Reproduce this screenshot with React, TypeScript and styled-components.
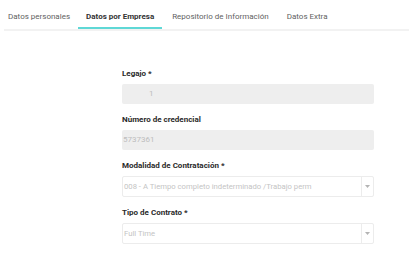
import * as React from 'react';
import styled, { createGlobalStyle } from 'styled-components';

const GlobalStyle = createGlobalStyle`
    body {
        margin: 0;
        background: #ffffff;
        font-family: Roboto, "Liberation Sans", Arial, sans-serif;
    }
`;

const tabs = ['Datos personales', 'Datos por Empresa', 'Repositorio de Información', 'Datos Extra'];

interface Field {
    label: string;
    value: string;
    kind: 'input' | 'select';
    indent?: number;
}

const fields: Field[] = [
    { label: 'Legajo *', value: '1', kind: 'input', indent: 27 },
    { label: 'Número de credencial', value: '5737361', kind: 'input' },
    { label: 'Modalidad de Contratación *', value: '008 - A Tiempo completo indeterminado /Trabajo perm', kind: 'select' },
    { label: 'Tipo de Contrato *', value: 'Full Time', kind: 'select' },
];

export default class App extends React.Component {
    renderField = (field: Field, index: number) => {
        return (
            <FieldBlock key={index}>
                <Label>{field.label}</Label>
                {field.kind === 'input' ? (
                    <ReadOnlyInput $indent={field.indent || 1}>{field.value}</ReadOnlyInput>
                ) : (
                    <SelectBox>
                        <SelectValue>{field.value}</SelectValue>
                        <SelectArrow>
                            <svg width="5" height="3" viewBox="0 0 5 3">
                                <path d="M0 0 H5 L2.5 3 Z" fill="#b4b4b4" />
                            </svg>
                        </SelectArrow>
                    </SelectBox>
                )}
            </FieldBlock>
        );
    }

    render() {
        return (
            <Page>
                <GlobalStyle />
                <TabBar>
                    {tabs.map((tab, index) => (
                        <Tab key={index} $active={index === 1}>{tab}</Tab>
                    ))}
                </TabBar>
                <Form>
                    {fields.map(this.renderField)}
                </Form>
            </Page>
        );
    }
}

const Page = styled.div`
    width: 409px;
    height: 264px;
    overflow: hidden;
`;

const TabBar = styled.div`
    display: flex;
    margin-left: 4px;
    border-bottom: 2px solid #f2f2f2;
    gap: 2px;
`;

const Tab = styled.div<{ $active?: boolean }>`
    padding: 11px 8px 4px;
    line-height: 12px;
    font-size: 8px;
    white-space: nowrap;
    color: ${props => props.$active ? '#333333' : '#5f5f5f'};
    font-weight: ${props => props.$active ? 700 : 400};
    border-bottom: 2px solid ${props => props.$active ? '#5fd8d6' : 'transparent'};
    &:first-child {
        padding-left: 4px;
        padding-right: 6px;
    }
`;

const Form = styled.div`
    width: 252px;
    margin: 37px 0 0 122px;
    display: flex;
    flex-direction: column;
    gap: 10px;
`;

const FieldBlock = styled.div`
    display: flex;
    flex-direction: column;
    gap: 4px;
`;

const Label = styled.div`
    font-size: 8px;
    line-height: 12px;
    font-weight: 700;
    color: #2a2a2a;
`;

const ReadOnlyInput = styled.div<{ $indent: number }>`
    height: 20px;
    line-height: 20px;
    background: #eeeeee;
    border-radius: 2px;
    padding-left: ${props => props.$indent}px;
    font-size: 8px;
    color: #bdbdbd;
`;

const SelectBox = styled.div`
    display: flex;
    height: 21px;
    box-sizing: border-box;
    border: 1px solid #ececec;
    border-radius: 2px;
    background: #ffffff;
`;

const SelectValue = styled.div`
    flex: 1;
    padding-left: 1px;
    line-height: 19px;
    font-size: 7.7px;
    color: #c4c4c4;
    white-space: nowrap;
    overflow: hidden;
`;

const SelectArrow = styled.div`
    width: 11px;
    border-left: 1px solid #ececec;
    display: flex;
    align-items: center;
    justify-content: center;
`;
